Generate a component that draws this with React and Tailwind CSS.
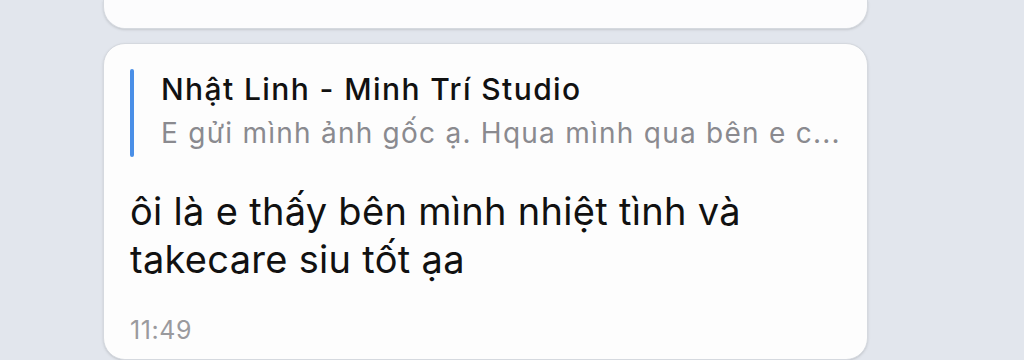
export default function App() {
  return (
    <div
      className="w-[1024px] h-[360px] overflow-hidden bg-[#e2e6ed] flex flex-col gap-[14px] pl-[103px] pr-[156px]"
      style={{ fontFamily: 'Inter, "Noto Sans", sans-serif' }}
    >
      {/* previous bubble, mostly scrolled out */}
      <div className="shrink-0 h-[29px] rounded-b-[22px] bg-[#fcfcfd] border border-t-0 border-[#d5d9df] shadow-sm" />

      {/* message bubble */}
      <div className="shrink-0 rounded-[22px] bg-[#fdfdfd] border border-[#d5d9df] shadow-sm pt-[25px] pl-[26px] pr-[20px] pb-[14px]">
        <div className="flex gap-[27px]">
          <div className="w-[4px] rounded-full bg-[#4a8fe7]" />
          <div className="flex flex-col whitespace-nowrap">
            <div className="text-[30px] leading-[40px] text-[#111] font-medium tracking-[1.4px]">
              Nhật Linh - Minh Trí Studio
            </div>
            <div className="text-[28px] leading-[48px] text-[#8a8a8f] tracking-[1.25px]">
              E gửi mình ảnh gốc ạ. Hqua mình qua bên e c...
            </div>
          </div>
        </div>
        <div className="mt-[30px] text-[38px] leading-[48px] text-[#111] tracking-[0.3px]">
          ôi là e thấy bên mình nhiệt tình và
          <br />
          takecare siu tốt ạa
        </div>
        <div className="mt-[32px] text-[25px] leading-[30px] text-[#9a9a9e] tracking-[0.6px]">11:49</div>
      </div>
    </div>
  );
}
